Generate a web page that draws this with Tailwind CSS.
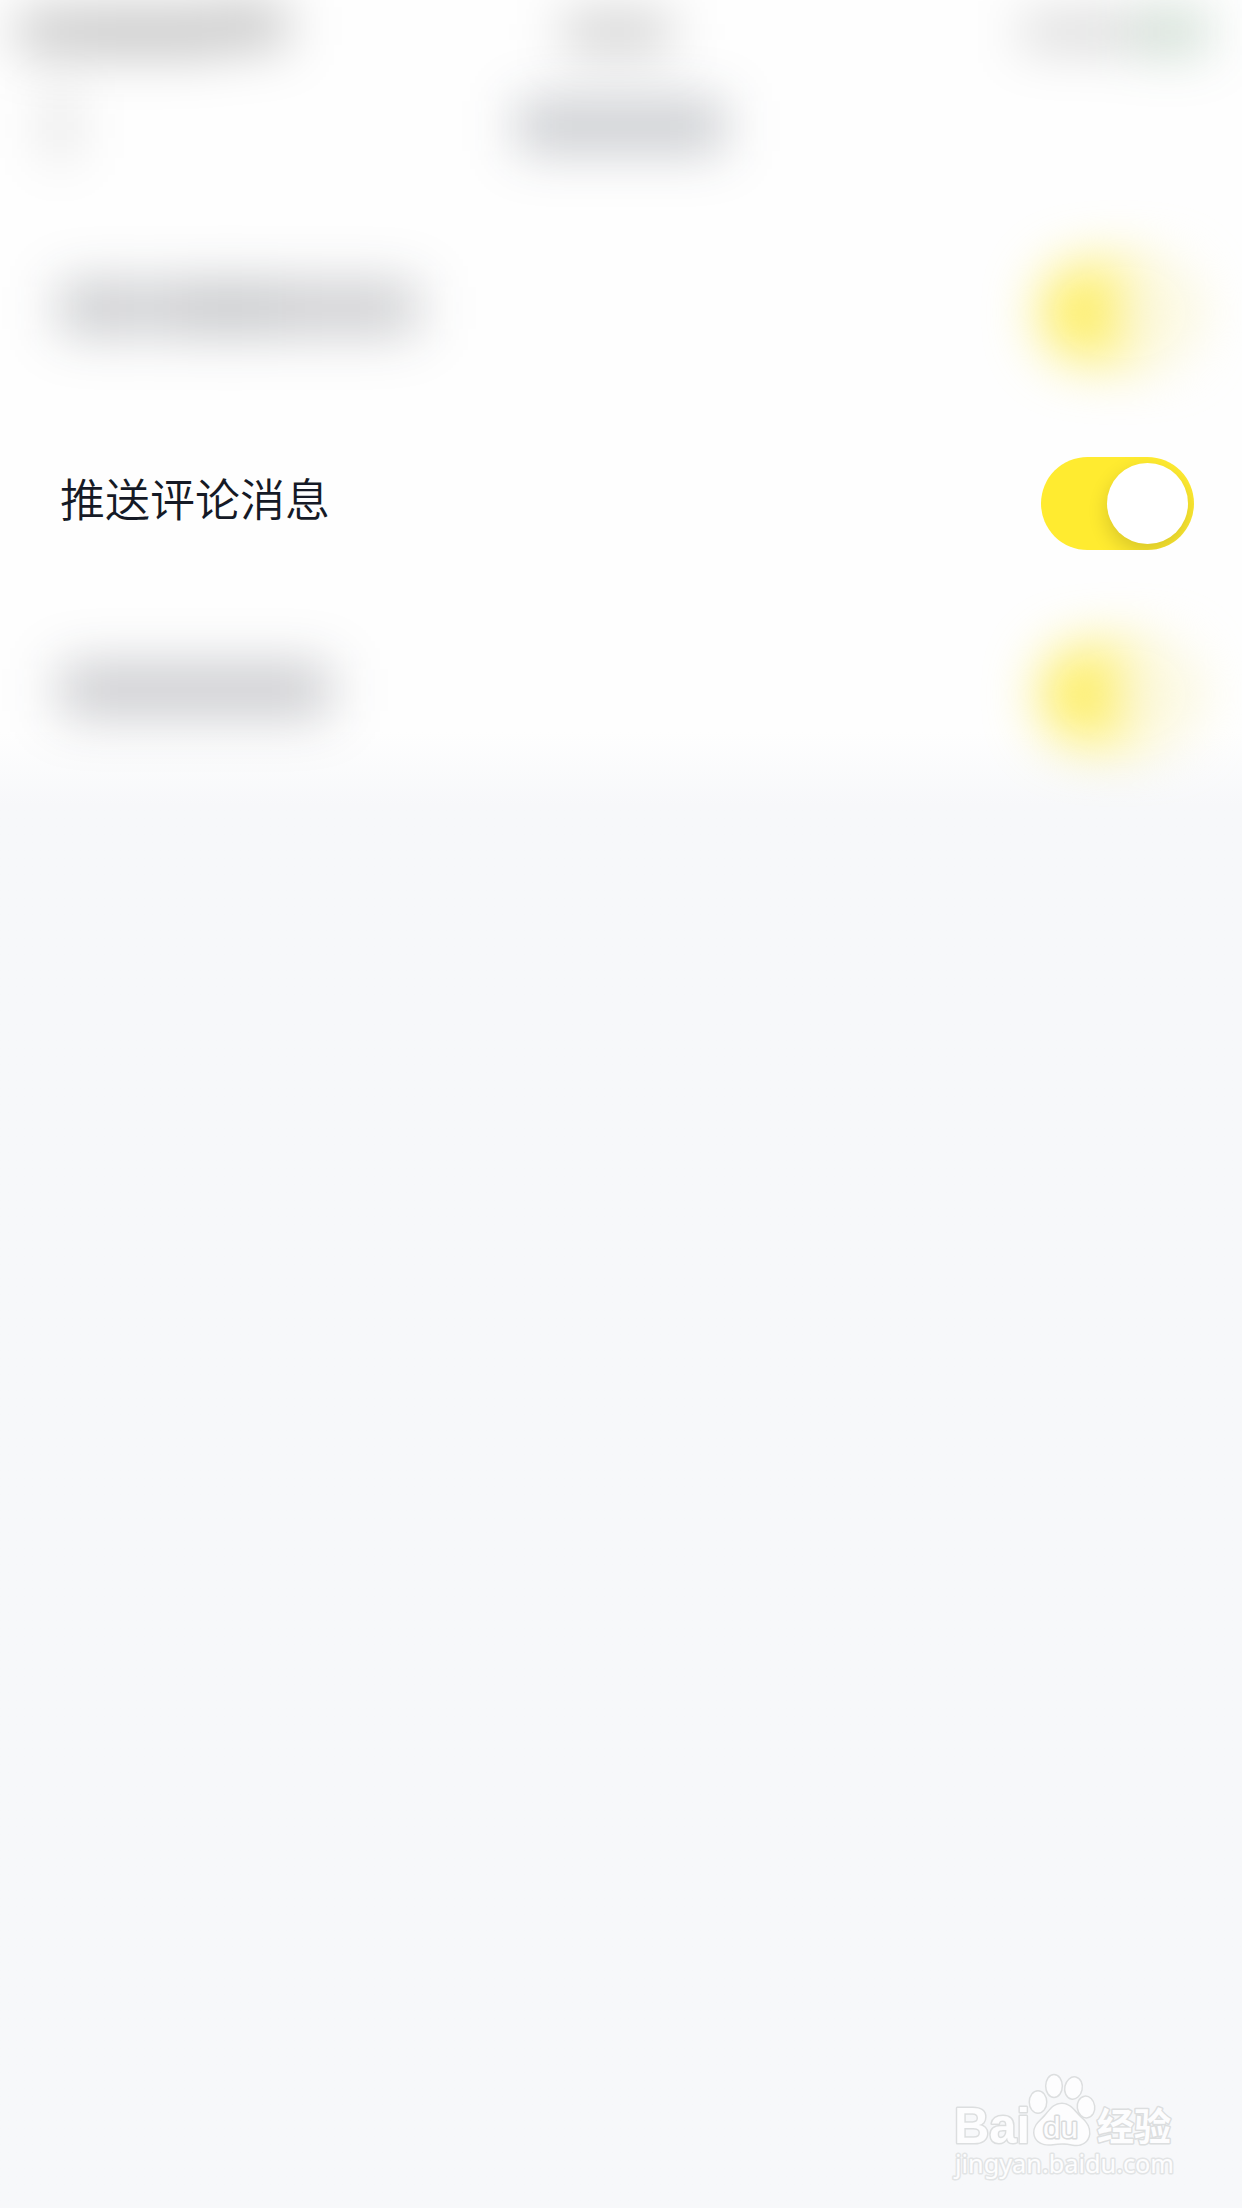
<!DOCTYPE html>
<html lang="zh-CN">
<head>
<meta charset="utf-8">
<title>推送评论消息</title>
<script src="https://cdn.jsdelivr.net/npm/@tailwindcss/browser@4"></script>
</head>
<body class="w-[1242px] h-[2208px] overflow-hidden bg-[#f7f8fa] font-['Noto_Sans_CJK_SC',sans-serif]">
<div class="relative flex flex-col w-[1242px] h-[2208px] overflow-hidden bg-linear-to-b from-[#fefefe] from-[732px] to-[#f7f8fa] to-[806px]">

  <!-- status bar, out of focus -->
  <header class="grid h-[60px] grid-cols-3 items-center pl-[18px] pr-[34px] blur-[26px]">
    <div class="flex items-center pt-1">
      <div class="h-11 w-[66px] bg-black/22"></div>
      <div class="h-11 w-[135px] bg-black/24"></div>
      <div class="mb-3 h-11 w-[68px] bg-black/23"></div>
    </div>
    <div class="ml-2 mt-1 h-9 w-[108px] justify-self-center bg-black/20"></div>
    <div class="flex items-center justify-self-end pt-1">
      <div class="h-8 w-[114px] bg-black/17"></div>
      <div class="h-10 w-[72px] bg-[#2f6f42]/26"></div>
    </div>
  </header>

  <!-- navigation bar, out of focus -->
  <nav class="flex h-[132px] items-center justify-between px-12 blur-[26px]">
    <div class="h-16 w-6 bg-black/14"></div>
    <div class="h-[52px] w-[208px] bg-[#1c2233]/23"></div>
    <div class="w-6"></div>
  </nav>

  <main class="flex flex-col pt-[25px]">
    <section class="flex h-[191px] items-center justify-between pl-[60px] pr-12">
      <div class="mb-2.5 flex h-[48px] w-[358px] blur-[27px]">
        <div class="w-16 bg-[#181d2a]/26"></div>
        <div class="w-12 bg-[#181d2a]/22"></div>
        <div class="w-[110px] bg-[#181d2a]/27"></div>
        <div class="flex-1 bg-[#181d2a]/24"></div>
      </div>
      <div class="flex h-[97px] w-[153px] items-center justify-end rounded-full bg-[#fdea45]/88 pr-1 blur-[27px]">
        <div class="h-[89px] w-[80px] rounded-full bg-[#fbf8e2]"></div>
      </div>
    </section>

    <section class="flex h-[191px] items-center justify-between pl-[60px] pr-12">
      <div class="mb-[11px] text-[45px] font-[350] leading-[60px] text-[#151a26]">推送评论消息</div>
      <div class="flex h-[93px] w-[153px] items-center justify-end overflow-hidden rounded-full bg-[#ffeb30] pr-1.5">
        <div class="size-[81px] rounded-full bg-white shadow-[0_8px_20px_rgba(0,0,0,0.16)]"></div>
      </div>
    </section>

    <section class="flex h-[191px] items-center justify-between pl-[60px] pr-12">
      <div class="mb-2.5 h-[48px] w-[270px] bg-[#181d2a]/25 blur-[27px]"></div>
      <div class="flex h-[97px] w-[153px] items-center justify-end rounded-full bg-[#fdea45]/88 pr-1 blur-[27px]">
        <div class="h-[89px] w-[80px] rounded-full bg-[#fbf8e2]"></div>
      </div>
    </section>
  </main>

  <!-- watermark -->
  <footer class="absolute left-[940px] top-[2060px]">
    <svg width="260" height="130" viewBox="0 0 260 130" fill="#fdfdfe" stroke="#dcdedf" stroke-linejoin="round" paint-order="stroke">
      <g stroke-width="3">
        <text x="14" y="83" textLength="76" lengthAdjust="spacingAndGlyphs" font-family="Liberation Sans" font-weight="700" font-size="50">Bai</text>
        <ellipse cx="98" cy="42" rx="8" ry="10.5"/>
        <ellipse cx="114" cy="26" rx="7.6" ry="10.7"/>
        <ellipse cx="133.5" cy="28" rx="8" ry="10.5" transform="rotate(12 133.5 28)"/>
        <ellipse cx="146" cy="47" rx="8" ry="10.2" transform="rotate(-8 146 47)"/>
        <path d="M122 44C130 44 134 51 140 57C146 62 149.5 67 149 74C148 82 141 86 133 84.5C126 83 120 83 113 84C104 85.5 95 82 94.5 73C94 65 101 61 106 55C111 49 114 44 122 44Z"/>
        <text x="157" y="80" textLength="74" lengthAdjust="spacingAndGlyphs" font-family="Noto Sans CJK SC" font-weight="700" font-size="38">经验</text>
        <text x="15" y="113" textLength="219" lengthAdjust="spacingAndGlyphs" font-family="Noto Sans" font-size="25" stroke="#e2e4e5">jingyan.baidu.com</text>
      </g>
      <text x="103" y="78" textLength="35" lengthAdjust="spacingAndGlyphs" font-family="Liberation Sans" font-size="30" stroke="#d9dbdc" stroke-width="3">du</text>
    </svg>
  </footer>
</div>
</body>
</html>
